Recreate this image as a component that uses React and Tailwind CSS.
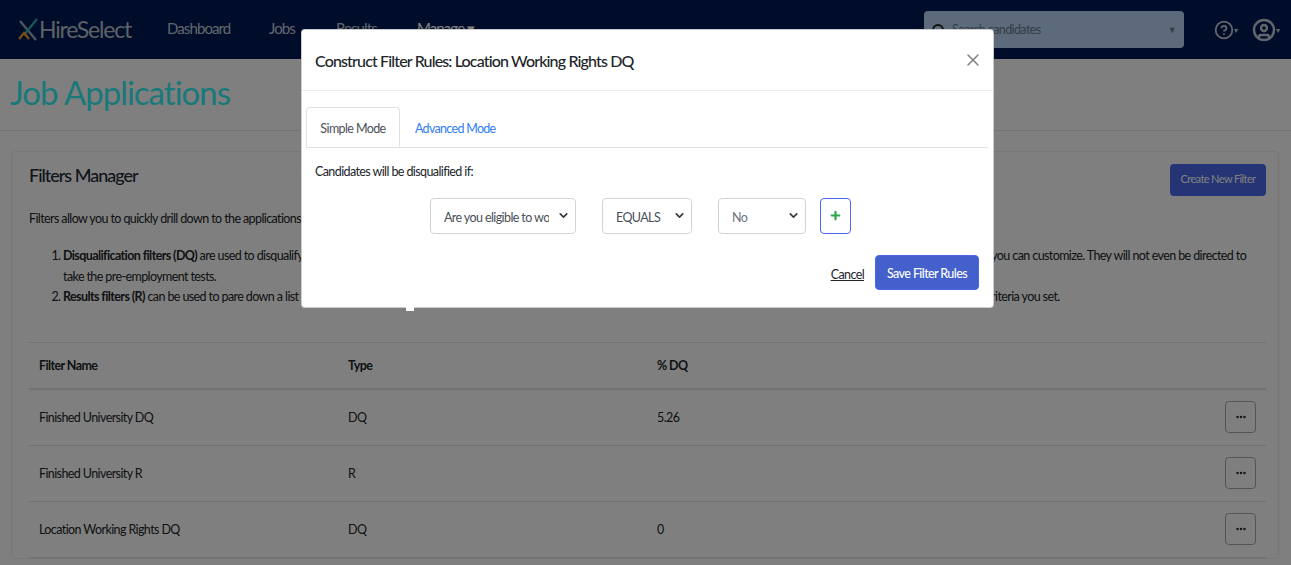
import React from "react";
import { ChevronDown, X, Plus, MoreHorizontal, CircleHelp, CircleUser } from "lucide-react";

const rows = [
  { name: "Finished University DQ", type: "DQ", dq: "5.26" },
  { name: "Finished University R", type: "R", dq: "" },
  { name: "Location Working Rights DQ", type: "DQ", dq: "0" },
];

const Logo = () => (
  <div className="flex items-center">
    <svg width="21" height="28" viewBox="0 0 21 28" fill="none">
      <path d="M2 5 L18 24" stroke="#9fb0bb" strokeWidth="2.2" />
      <path d="M6 19 L19 3" stroke="#2fb5b5" strokeWidth="2.2" />
      <path d="M1 23 L6 17 L11 23" stroke="#f0a020" strokeWidth="2.2" />
    </svg>
    <span className="text-[23px] text-[#b8c4cc] tracking-[-1.2px]">HireSelect</span>
  </div>
);

const Select = ({ text, width, textColor }) => (
  <div className={`flex items-center justify-between gap-[8px] h-[36px] pl-[13px] pr-[5px] bg-white border border-[#ced4da] rounded ${width} ${textColor}`}>
    <span className="overflow-hidden whitespace-nowrap pr-[2px] pt-[5px]">{text}</span>
    <ChevronDown size={13} strokeWidth={3} className="text-[#343a40] shrink-0" />
  </div>
);

const App = () => {
  return (
    <div className="relative h-[565px] overflow-hidden bg-white font-['Lato',sans-serif] text-[12.5px] tracking-[-0.6px] text-[#212529]">
      {/* top nav */}
      <header className="flex items-center h-[59px] pl-[18px] pr-[9px] bg-[#001a55]">
        <Logo />
        <nav className="flex items-center ml-9 pb-[2px] text-[15px] tracking-[-0.9px] text-[#c4ccd8]">
          <span className="w-[102px]">Dashboard</span>
          <span className="w-[67px]">Jobs</span>
          <span className="w-[81px]">Results</span>
          <span className="text-white">Manage ▾</span>
        </nav>
        <div className="flex items-center justify-between w-[260px] h-[37px] ml-auto px-2 bg-[#b8d4f8] rounded text-[#6b7a8c]">
          <span className="flex items-center gap-2">
            <span className="w-3 h-3 rounded-full border-2 border-[#222]"></span>
            <span className="pt-[2px]">Search candidates</span>
          </span>
          <span className="text-[9px]">▼</span>
        </div>
        <div className="flex items-center gap-[12px] ml-[30px] text-[#c4ccd8]">
          <span className="flex items-center w-[26px] text-[8px]">
            <CircleHelp size={20} strokeWidth={2.2} />▾
          </span>
          <span className="flex items-center w-[30px] text-[8px]">
            <CircleUser size={24} strokeWidth={2.4} />▾
          </span>
        </div>
      </header>

      {/* page title */}
      <div className="flex items-center h-[72px] pl-[10px] pb-[3px] border-b border-[#e4e4e4]">
        <h1 className="text-[33px] text-[#33f2f4] tracking-[-1px]">Job Applications</h1>
      </div>

      {/* filters card */}
      <section className="ml-[11px] mr-[12px] mt-5 pl-[17px] pr-[12px] pt-[11px] bg-white border border-[#eee] rounded">
        <div className="flex items-center justify-between h-[33px]">
          <h2 className="text-[18px] font-medium text-[#212b36] mt-[-9px] tracking-[-1px]">Filters Manager</h2>
          <button className="w-[96px] h-8 bg-[#4a68e8] rounded text-[11px] text-white">Create New Filter</button>
        </div>
        <p className="mt-3 leading-[21px]">Filters allow you to quickly drill down to the applications that best fit the requirements of your job.</p>
        <ol className="mt-[17px] pl-[34px] list-decimal leading-[20.5px]">
          <li>
            <b>Disqualification filters (DQ)</b> are used to disqualify candidates from the entire online application process. Disqualified candidates will be swiftly and fully removed and taken to a thank you page you can customize. They will not even be directed to take the pre-employment tests.
          </li>
          <li>
            <b>Results filters (R)</b> can be used to pare down a list of candidates on your results page after they have completed the tests and been scored so that you only see those candidates who meet the criteria you set.
          </li>
        </ol>

        <table className="w-full mt-[34px] text-left">
          <thead>
            <tr className="h-[47px] border-t border-b-2 border-[#dee2e6]">
              <th className="w-[309px] pl-[10px] pt-[2px] font-bold">Filter Name</th>
              <th className="w-[309px] pl-[10px] pt-[2px] font-bold">Type</th>
              <th className="pl-[10px] pt-[2px] font-bold">% DQ</th>
              <th></th>
            </tr>
          </thead>
          <tbody>
            {rows.map((r) => (
              <tr key={r.name} className="h-[56px] border-b border-[#dee2e6]">
                <td className="pl-[10px] pt-[2px]">{r.name}</td>
                <td className="pl-[10px] pt-[2px]">{r.type}</td>
                <td className="pl-[10px] pt-[2px]">{r.dq}</td>
                <td className="pr-[10px]">
                  <button className="flex items-center justify-center w-[31px] h-[32px] ml-auto border border-[#aaa] rounded">
                    <MoreHorizontal size={12} strokeWidth={3} />
                  </button>
                </td>
              </tr>
            ))}
          </tbody>
        </table>
      </section>

      {/* modal backdrop */}
      <div className="absolute inset-0 bg-black/50"></div>

      {/* modal */}
      <div className="absolute left-[301px] top-[29px] w-[693px] h-[279px] bg-white border border-black/20 rounded">
        <div className="flex items-center justify-between h-[61px] pl-[13px] pr-[13px] border-b border-[#e9ecef]">
          <h3 className="pt-[2px] text-[16px] font-medium text-[#212529] tracking-[-0.85px]">Construct Filter Rules: Location Working Rights DQ</h3>
          <X size={20} strokeWidth={1.75} className="text-[#808080] mt-[-1px] mr-[-3px]" />
        </div>
        <div className="px-[4px] pt-[16px]">
          <div className="flex mr-[1px] border-b border-[#dee2e6]">
            <div className="flex items-center justify-center w-[94px] h-[40px] pt-[5px] mb-[-1px] bg-white border border-b-white border-[#dee2e6] rounded-t text-[#495057]">Simple Mode</div>
            <div className="flex items-center h-[40px] pt-[5px] pl-[15px] tracking-[-0.7px] text-[#2f7cf6]">Advanced Mode</div>
          </div>
          <p className="mt-[15px] ml-[9px] text-[#212529]">Candidates will be disqualified if:</p>
          <div className="flex items-center mt-[16px] ml-[124px]">
            <Select text="Are you eligible to work" width="w-[146px]" textColor="text-[#495057]" />
            <div className="w-[26px]"></div>
            <Select text="EQUALS" width="w-[90px]" textColor="text-[#495057]" />
            <div className="w-[26px]"></div>
            <Select text="No" width="w-[88px]" textColor="text-[#6b7280]" />
            <button className="flex items-center justify-center w-[31px] h-[36px] ml-[14px] border border-[#4a68e8] rounded">
              <Plus size={13} strokeWidth={4} className="text-[#28a745]" />
            </button>
          </div>
          <div className="flex items-center justify-end gap-[11px] mt-[21px] mr-[10px]">
            <span className="pt-[6px] underline text-[#212529]">Cancel</span>
            <button className="w-[104px] h-[35px] pt-[4px] bg-[#4360cc] border border-[#4a68e8] rounded font-medium text-white">Save Filter Rules</button>
          </div>
        </div>
        <div className="absolute left-[104px] bottom-[-4px] w-2 h-[5px] bg-white"></div>
      </div>
    </div>
  );
};

export default App;
